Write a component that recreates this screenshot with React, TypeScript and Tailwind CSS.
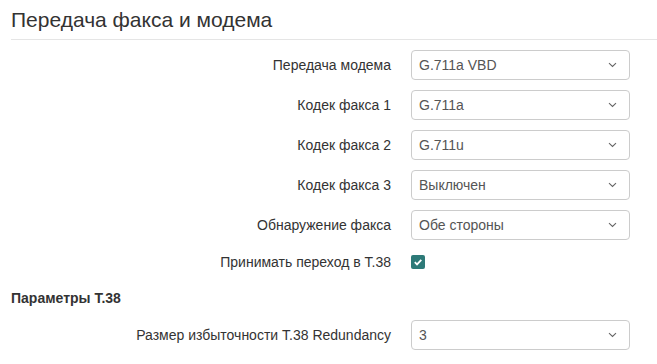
const font = { fontFamily: '"Liberation Sans", Arial, sans-serif' };

function Chevron() {
  return (
    <svg width="9" height="6" viewBox="0 0 9 6" className="absolute right-[12px] top-1/2 -translate-y-1/2">
      <path d="M1 1.2l3.5 3.3L8 1.2" fill="none" stroke="#666" strokeWidth="1.1" />
    </svg>
  );
}

function SelectRow({ label, value }: { label: string; value: string }) {
  return (
    <div className="flex items-center h-[30px]">
      <label className="w-[380px] text-right text-[14px] text-[#333]">{label}</label>
      <div className="relative ml-[20px] w-[219px] h-[30px] border border-[#ccc] rounded-[4px] bg-white flex items-center pl-[7px] text-[14px] text-[#555]">
        {value}
        <Chevron />
      </div>
    </div>
  );
}

export default function App() {
  const rows = [
    ["Передача модема", "G.711a VBD"],
    ["Кодек факса 1", "G.711a"],
    ["Кодек факса 2", "G.711u"],
    ["Кодек факса 3", "Выключен"],
    ["Обнаружение факса", "Обе стороны"],
  ];
  return (
    <div className="w-[657px] h-[364px] bg-white overflow-hidden pl-[11px]" style={font}>
      <h2 className="text-[21px] text-[#333] leading-[24px] pt-[8px] pb-[7px] border-b border-[#e5e5e5]">
        Передача факса и модема
      </h2>
      <div className="flex flex-col gap-[10px] pt-[10px]">
        {rows.map(([l, v]) => (
          <SelectRow key={l} label={l} value={v} />
        ))}
      </div>
      <div className="flex items-center h-[24px] mt-[10px]">
        <label className="w-[380px] text-right text-[14px] text-[#333]">Принимать переход в T.38</label>
        <span className="ml-[20px] w-[14px] h-[14px] rounded-[2px] bg-[#2d7a78] flex items-center justify-center">
          <svg width="10" height="10" viewBox="0 0 10 10">
            <path d="M1.8 5.2l2.2 2.2L8.3 2.8" fill="none" stroke="white" strokeWidth="1.8" />
          </svg>
        </span>
      </div>
      <div className="h-[24px] mt-[12px] flex items-center text-[14px] font-bold text-[#333]">Параметры T.38</div>
      <div className="mt-[10px]">
        <SelectRow label="Размер избыточности T.38 Redundancy" value="3" />
      </div>
    </div>
  );
}
